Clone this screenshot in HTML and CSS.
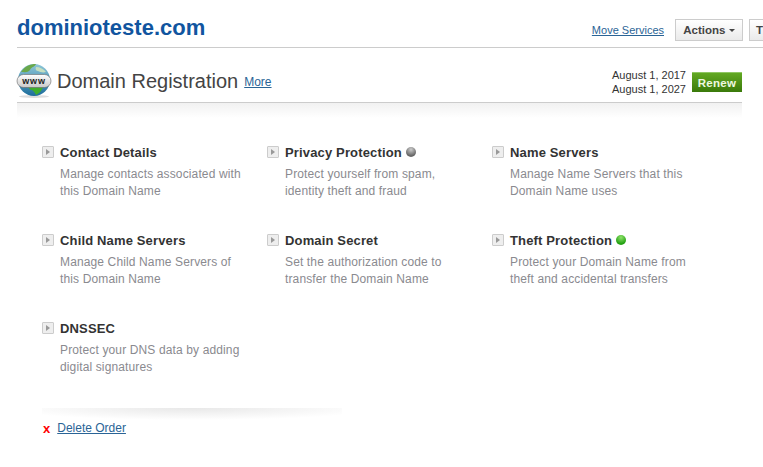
FILE: index.html
```html
<!DOCTYPE html>
<html lang="en">
<head>
    <meta charset="UTF-8">
    <title>dominioteste.com</title>
    <link rel="stylesheet" href="styles.css">
</head>
<body>
    <!-- page header -->
    <div class="page-head">
        <h1 class="domain">dominioteste.com</h1>
        <div class="head-links">
            <a href="#" class="link">Move Services</a>
            <button class="btn">Actions <span class="caret"></span></button>
            <button class="btn btn-cut">T</button>
        </div>
    </div>

    <!-- product bar -->
    <div class="product-bar">
        <svg class="globe" width="36" height="36" viewBox="0 0 36 36">
            <defs>
                <linearGradient id="sea" x1="0" y1="0" x2="0" y2="1">
                    <stop offset="0" stop-color="#8fc7d8"/>
                    <stop offset="1" stop-color="#1c6d9c"/>
                </linearGradient>
                <linearGradient id="pill" x1="0" y1="0" x2="0" y2="1">
                    <stop offset="0" stop-color="#ffffff"/>
                    <stop offset="1" stop-color="#c9c9c9"/>
                </linearGradient>
            </defs>
            <ellipse cx="18" cy="33.5" rx="15" ry="1.5" fill="#dddddd"/>
            <circle cx="18" cy="17" r="16" fill="url(#sea)"/>
            <path d="M5 9C9 3 14 1 20 1c-1 3-5 3-6 6-2 3-6 2-9 2z" fill="#6aa84a"/>
            <path d="M20 4c4 0 8 2 10 5-3 1-6 0-8-1-2 0-3-2-2-4z" fill="#c5dfc0"/>
            <path d="M12 24h15c-1 3-3 6-7 8-1-2-2-4-4-5-2 0-3-2-4-3z" fill="#3fae2c"/>
            <rect x="1" y="11.5" width="34" height="13" rx="6.5" fill="url(#pill)" stroke="#666666" stroke-width="0.6"/>
            <text x="18" y="21" class="globe-text" text-anchor="middle">www</text>
        </svg>
        <h2 class="product-name">Domain Registration</h2>
        <a href="#" class="link more">More</a>
        <div class="dates">
            <div>August 1, 2017</div>
            <div>August 1, 2027</div>
        </div>
        <button class="renew">Renew</button>
    </div>
    <div class="bar-shade"></div>

    <!-- order actions -->
    <div class="grid">
        <div class="item">
            <div class="item-title"><span class="arrow"></span>Contact Details</div>
            <p class="item-desc">Manage contacts associated with this Domain Name</p>
        </div>
        <div class="item">
            <div class="item-title"><span class="arrow"></span>Privacy Protection <span class="dot dot-off"></span></div>
            <p class="item-desc">Protect yourself from spam, identity theft and fraud</p>
        </div>
        <div class="item">
            <div class="item-title"><span class="arrow"></span>Name Servers</div>
            <p class="item-desc">Manage Name Servers that this Domain Name uses</p>
        </div>
        <div class="item">
            <div class="item-title"><span class="arrow"></span>Child Name Servers</div>
            <p class="item-desc">Manage Child Name Servers of this Domain Name</p>
        </div>
        <div class="item">
            <div class="item-title"><span class="arrow"></span>Domain Secret</div>
            <p class="item-desc">Set the authorization code to transfer the Domain Name</p>
        </div>
        <div class="item">
            <div class="item-title"><span class="arrow"></span>Theft Protection <span class="dot dot-on"></span></div>
            <p class="item-desc">Protect your Domain Name from theft and accidental transfers</p>
        </div>
        <div class="item">
            <div class="item-title"><span class="arrow"></span>DNSSEC</div>
            <p class="item-desc">Protect your DNS data by adding digital signatures</p>
        </div>
    </div>

    <!-- delete -->
    <div class="foot-shade"></div>
    <div class="delete-row">
        <span class="cross">x</span>
        <a href="#" class="link">Delete Order</a>
    </div>
</body>
</html>
```

FILE: styles.css
```css
* {
    margin: 0;
    padding: 0;
    box-sizing: border-box;
}

body {
    width: 763px;
    height: 467px;
    overflow: hidden;
    background: #fff;
    font-family: "Liberation Sans", Arial, sans-serif;
    color: #333;
    padding-left: 17px;
}

.link {
    color: #2a6496;
    font-size: 12px;
    text-decoration: underline;
}

/* page header */
.page-head {
    display: flex;
    align-items: flex-end;
    justify-content: space-between;
    height: 48px;
    width: 746px;
    border-bottom: 1px solid #ccc;
    padding-bottom: 6px;
}
.domain {
    font-size: 22px;
    line-height: 26px;
    color: #11559f;
    align-self: flex-start;
    margin-top: 15px;
}
.head-links {
    display: flex;
    align-items: center;
    flex: none;
}
.head-links .link {
    margin-right: 11px;
    font-size: 11px;
}
.btn {
    width: 68px;
    height: 22px;
    padding: 0;
    background: linear-gradient(#fff, #eaeaea);
    border: 1px solid #ccc;
    font-family: inherit;
    font-size: 11.5px;
    font-weight: bold;
    color: #444;
}
.btn-cut {
    width: 14px;
    margin-left: 6px;
    padding-left: 6px;
    border-right: 0;
    text-align: left;
}
.caret {
    display: inline-block;
    border: 3px solid transparent;
    border-top-color: #444;
    border-bottom: 0;
    vertical-align: middle;
}

/* product bar */
.product-bar {
    display: flex;
    align-items: center;
    width: 725px;
    height: 55px;
    border-bottom: 1px solid #ccc;
    padding-top: 14px;
}
.globe {
    flex: none;
    margin: 0 0 3px -1px;
}
.globe-text {
    font-family: "Liberation Sans", Arial, sans-serif;
    font-size: 9px;
    font-weight: bold;
    letter-spacing: 0.8px;
    fill: #222;
}
.product-name {
    font-size: 20px;
    font-weight: normal;
    color: #444;
    margin: 0 0 2px 5px;
}
.more {
    margin-left: 6px;
}
.dates {
    margin-left: auto;
    font-size: 11px;
    line-height: 14px;
    text-align: right;
    color: #333;
}
.renew {
    width: 50px;
    height: 20px;
    margin-left: 6px;
    background: linear-gradient(#62a822, #3a7a0a);
    border: 0;
    border-top: 1px solid #8fc663;
    font-family: inherit;
    font-size: 11.5px;
    font-weight: bold;
    color: #eef8e0;
    letter-spacing: 0.3px;
}
.bar-shade {
    width: 725px;
    height: 15px;
    background: linear-gradient(#f1f1f1, #fff);
}

/* order actions */
.grid {
    display: grid;
    grid-template-columns: repeat(3, 225px);
    grid-auto-rows: 88px;
    padding: 26px 0 0 25px;
}
.item-title {
    display: flex;
    align-items: center;
    height: 16px;
    font-size: 13px;
    font-weight: bold;
    letter-spacing: 0.15px;
    color: #333;
}
.arrow {
    position: relative;
    flex: none;
    width: 12px;
    height: 12px;
    margin-right: 6px;
    background: #eee;
    border: 1px solid #ccc;
    border-radius: 1px;
}
.arrow::after {
    content: "";
    position: absolute;
    left: 3px;
    top: 2px;
    border: 3px solid transparent;
    border-left: 4px solid #999;
    border-right: 0;
}
.dot {
    flex: none;
    width: 10px;
    height: 10px;
    margin-left: 4px;
    border-radius: 50%;
}
.dot-off {
    background: radial-gradient(circle at 50% 25%, #ccc, #666 70%);
}
.dot-on {
    background: radial-gradient(circle at 50% 25%, #8fe36a, #22a012 70%);
}
.item-desc {
    width: 188px;
    margin: 6px 0 0 18px;
    font-size: 12px;
    line-height: 17px;
    letter-spacing: 0.13px;
    color: #8a8a8f;
}

/* delete */
.foot-shade {
    width: 300px;
    height: 12px;
    margin: 0 0 0 25px;
    background: radial-gradient(ellipse 62% 100% at 50% 0, #e8e8e8, #fff);
}
.delete-row {
    display: flex;
    align-items: center;
    gap: 7px;
    margin: 0 0 0 26px;
    height: 16px;
}
.cross {
    color: #f00;
    font-size: 13px;
    font-weight: bold;
}
```
